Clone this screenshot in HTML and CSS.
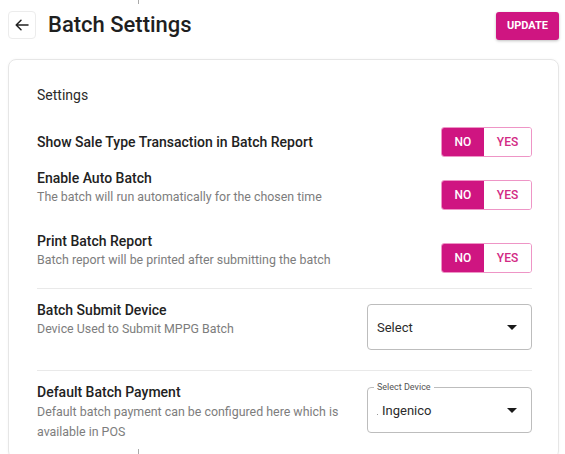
FILE: index.html
```html
<!DOCTYPE html>
<html>
<head>
<meta charset="utf-8">
<link rel="stylesheet" href="styles.css">
</head>
<body>
<div class="page">
  <header class="header">
    <div class="header-left">
      <button class="back" aria-label="Back">
        <svg width="14" height="12" viewBox="0 0 14 12"><path d="M13 6H1.5M6 1.2L1.2 6 6 10.8" fill="none" stroke="#222" stroke-width="1.5" stroke-linecap="round" stroke-linejoin="round"/></svg>
      </button>
      <h1 class="title">Batch Settings</h1>
    </div>
    <button class="update">UPDATE</button>
  </header>

  <section class="card">
    <div class="card-title">Settings</div>

    <div class="row row-1">
      <div class="text"><div class="label">Show Sale Type Transaction in Batch Report</div></div>
      <div class="toggle"><span class="opt on">NO</span><span class="opt">YES</span></div>
    </div>

    <div class="row row-2">
      <div class="text">
        <div class="label">Enable Auto Batch</div>
        <div class="desc">The batch will run automatically for the chosen time</div>
      </div>
      <div class="toggle shift"><span class="opt on">NO</span><span class="opt">YES</span></div>
    </div>

    <div class="row row-3">
      <div class="text">
        <div class="label">Print Batch Report</div>
        <div class="desc">Batch report will be printed after submitting the batch</div>
      </div>
      <div class="toggle shift"><span class="opt on">NO</span><span class="opt">YES</span></div>
    </div>

    <hr class="divider d1">

    <div class="row row-4">
      <div class="text">
        <div class="label">Batch Submit Device</div>
        <div class="desc">Device Used to Submit MPPG Batch</div>
      </div>
      <div class="select s1">
        <span class="value">Select</span>
        <span class="caret"></span>
      </div>
    </div>

    <hr class="divider d2">

    <div class="row row-5">
      <div class="text">
        <div class="label">Default Batch Payment</div>
        <div class="desc multi">Default batch payment can be configured here which is available in POS</div>
      </div>
      <div class="select s2">
        <span class="legend">Select Device</span>
        <span class="value"><span class="dot"></span>Ingenico</span>
        <span class="caret"></span>
      </div>
    </div>
  </section>
</div>
<span class="tick tick-top"></span>
<span class="tick tick-bottom"></span>
</body>
</html>
```

FILE: styles.css
```css
* { box-sizing: border-box; }
html, body { margin: 0; padding: 0; background: #fff; }
body {
  font-family: Roboto, "Liberation Sans", Arial, sans-serif;
  color: #212121;
  width: 565px;
  height: 454px;
  overflow: hidden;
  position: relative;
}
.page { padding: 10px 6px 0 8px; height: 454px; overflow: hidden; }

.header {
  display: flex;
  align-items: center;
  justify-content: space-between;
  height: 29px;
}
.header-left { display: flex; align-items: center; }
.back {
  width: 28px;
  height: 28px;
  border: 1px solid #ececec;
  border-radius: 4px;
  background: #fff;
  display: flex;
  align-items: center;
  justify-content: center;
  padding: 0;
  margin: 0;
}
.title {
  margin: 0 0 0 12px;
  font-size: 22px;
  font-weight: 500;
  color: #1f1f1f;
  letter-spacing: 0;
}
.update {
  width: 63px;
  height: 28px;
  margin-top: 2px;
  background: #cf1581;
  color: #fff;
  border: none;
  border-radius: 3px;
  font-family: inherit;
  font-size: 11px;
  font-weight: 700;
  letter-spacing: 0;
  box-shadow: 0 1px 3px rgba(0,0,0,0.25);
  padding: 0;
}

.card {
  margin-top: 20px;
  height: 400px;
  border: 1px solid #e6e6e6;
  border-radius: 8px;
  padding: 25px 26px 0 28px;
  box-shadow: 0 0 3px rgba(0,0,0,0.04);
}
.card-title {
  font-size: 14px;
  line-height: 20px;
  color: #2a2a2a;
}

.row {
  display: flex;
  justify-content: space-between;
  align-items: flex-start;
}
.text { flex: 1; min-width: 0; margin-right: 30px; }
.label { font-size: 14px; line-height: 20px; font-weight: 500; color: #222; }
.desc { font-size: 12.4px; line-height: 18px; color: #7d7d7d; }
.desc.multi { line-height: 20px; width: 320px; }

.row-1 { margin-top: 22px; align-items: center; }
.row-2 { margin-top: 11px; }
.row-3 { margin-top: 21px; }

.toggle {
  display: flex;
  height: 30px;
  border: 1px solid #ee95c6;
  border-radius: 3px;
  overflow: hidden;
  flex: none;
}
.toggle.shift { margin-top: 12px; }
.opt {
  display: flex;
  align-items: center;
  justify-content: center;
  width: 47px;
  font-size: 12px;
  font-weight: 500;
  color: #d22a84;
  background: #fff;
}
.opt.on {
  width: 42px;
  background: #cf1581;
  color: #fff;
}

.divider {
  border: none;
  border-top: 1px solid #e9e9e9;
  margin: 0;
}
.d1 { margin-top: 15px; }
.d2 { margin-top: 0; }

.row-4 { margin-top: 11px; height: 70px; }
.row-5 { margin-top: 11px; }

.select {
  position: relative;
  width: 165px;
  height: 46px;
  border: 1px solid #bdbdbd;
  border-radius: 4px;
  display: flex;
  align-items: center;
  padding-left: 9px;
  flex: none;
}
.s1 { margin-top: 4px; }
.s2 { margin-top: 5px; }
.value { font-size: 13px; color: #2b2b2b; display: flex; align-items: center; }
.dot {
  width: 1px; height: 1px; background: #999;
  margin-right: 4px; align-self: flex-end; margin-bottom: 3px;
}
.caret {
  position: absolute;
  right: 14px;
  top: 50%;
  margin-top: -2px;
  width: 0; height: 0;
  border-left: 5px solid transparent;
  border-right: 5px solid transparent;
  border-top: 5px solid #1a1a1a;
}
.legend {
  position: absolute;
  left: 6px;
  top: -7px;
  background: #fff;
  padding: 0 3px;
  font-size: 9px;
  line-height: 12px;
  color: #555;
}

.tick {
  position: absolute;
  width: 1px;
  background: #aaa;
  left: 138px;
}
.tick-top { top: 0; height: 4px; }
.tick-bottom { bottom: 0; height: 5px; }
```
